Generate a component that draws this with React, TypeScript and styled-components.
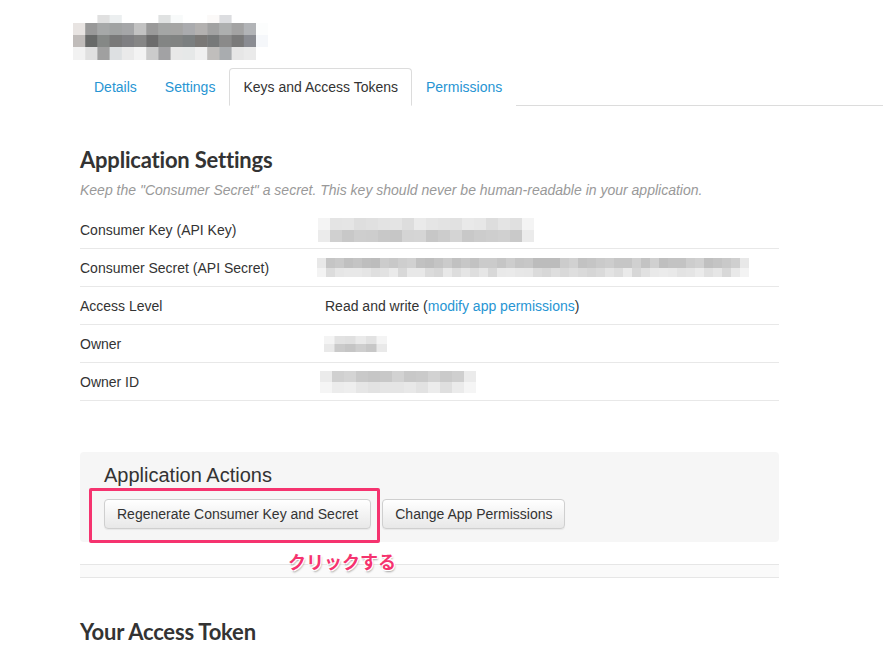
import styled, { createGlobalStyle } from "styled-components";

const GlobalStyle = createGlobalStyle`
  html, body {
    margin: 0;
    padding: 0;
    background: #fff;
  }
  body {
    font-family: "Liberation Sans", Arial, sans-serif;
    color: #333;
  }
`;

// pixelated placeholders for the hidden app name and key values
type MosaicProps = {
  cell: number;
  cellHeights?: number[];
  grid: string[][];
};

const Mosaic = ({ cell, cellHeights, grid }: MosaicProps) => {
  const heights = cellHeights ?? grid.map(() => cell);
  const width = grid[0].length * cell;
  const height = heights.reduce((a, b) => a + b, 0);
  let y = 0;
  return (
    <svg width={width} height={height} style={{ display: "block" }}>
      {grid.map((row, r) => {
        const top = y;
        y += heights[r];
        return row.map((color, c) => (
          <rect
            key={`${r}-${c}`}
            x={c * cell}
            y={top}
            width={cell + 0.5}
            height={heights[r]}
            fill={color}
          />
        ));
      })}
    </svg>
  );
};

const seeded = (seed: number) => {
  let s = seed;
  return () => {
    s = (s * 9301 + 49297) % 233280;
    return s / 233280;
  };
};

const shade = (v: number) => {
  const n = Math.max(0, Math.min(255, Math.round(v)));
  const h = n.toString(16).padStart(2, "0");
  return `#${h}${h}${h}`;
};

const makeGrid = (cols: number, tones: number[], spread: number, seed: number) => {
  const rand = seeded(seed);
  return tones.map((tone) =>
    Array.from({ length: cols }, (_, i) => {
      if (i === 0 || i === cols - 1) return shade(tone + (255 - tone) * 0.6);
      return shade(tone + (rand() - 0.5) * spread);
    })
  );
};

const titleGrid: string[][] = [
  ["#fff", "#fff", "#e0e0e0", "#eceff0", "#fff", "#fff", "#fff", "#e0e2e2", "#f8fafa", "#fff", "#fff", "#fbf9f8", "#dcdde0", "#fff", "#fff", "#fff"],
  ["#e8e4e2", "#999999", "#a6a8a8", "#a1a3a3", "#a5a6a8", "#c2c2c2", "#9a9a9a", "#a4a6a5", "#a5a5a4", "#aaabae", "#b3b1b0", "#a2a2a2", "#adafaf", "#a3a3a3", "#b2b4b7", "#fcfdfd"],
  ["#c0bcba", "#686a69", "#858886", "#797979", "#7f7f82", "#868686", "#6c6c6c", "#838584", "#818382", "#7b7f80", "#7a7876", "#777979", "#8a8a8a", "#7a7a7a", "#8a8c92", "#f5f7fa"],
  ["#f2f2f2", "#e0e0e0", "#a0a0a0", "#dde0e2", "#eaeaea", "#f3f3f3", "#cbcbcb", "#a2a2a4", "#e8e8e8", "#e6e8e8", "#f0f0f0", "#c0bebc", "#a9acaf", "#e6e6e6", "#eaeaea", "#fff"],
];

const Page = styled.div`
  padding: 15px 0 0 80px;
  min-height: 649px;
  box-sizing: border-box;
  overflow: hidden;
`;

const AppName = styled.div`
  margin-left: -7px;
  height: 45px;
`;

const TabBar = styled.ul`
  display: flex;
  list-style: none;
  margin: 8px 0 0;
  padding: 0;
  height: 37px;
  border-bottom: 1px solid #dcdcdc;
`;

const Tab = styled.li<{ $active?: boolean }>`
  display: flex;
  align-items: center;
  padding: 0 13px;
  font-size: 14px;
  color: ${({ $active }) => ($active ? "#333" : "#2795d3")};
  background: #fff;
  border: 1px solid ${({ $active }) => ($active ? "#dcdcdc" : "transparent")};
  border-bottom-color: transparent;
  border-radius: 4px 4px 0 0;
  margin-bottom: -1px;
  cursor: pointer;
`;

const Content = styled.div`
  width: 699px;
`;

const SectionTitle = styled.h2`
  margin: 40px 0 0;
  font-family: "Lato", "Liberation Sans", sans-serif;
  font-weight: 700;
  font-size: 22px;
  line-height: 28px;
  color: #333;
  letter-spacing: -0.2px;
`;

const Hint = styled.p`
  margin: 6px 0 11px;
  font-size: 14px;
  line-height: 20px;
  font-style: italic;
  color: #999;
`;

const Table = styled.div`
  display: flex;
  flex-direction: column;
`;

const Row = styled.div`
  display: grid;
  grid-template-columns: 245px 1fr;
  align-items: center;
  height: 37px;
  border-bottom: 1px solid #e8e8e8;
  font-size: 14px;
  color: #333;
`;

const Value = styled.div<{ $shift?: number }>`
  display: flex;
  align-items: center;
  margin-left: ${({ $shift }) => $shift ?? 0}px;
`;

const Link = styled.a`
  color: #2795d3;
  text-decoration: none;
`;

const ActionsPanel = styled.div`
  position: relative;
  margin-top: 51px;
  padding: 11px 24px 13px;
  background: #f6f6f6;
  border-radius: 4px;
`;

const PanelTitle = styled.h3`
  margin: 0 0 12px;
  font-size: 20px;
  font-weight: 400;
  line-height: 24px;
  color: #333;
`;

const ButtonRow = styled.div`
  display: flex;
  gap: 11px;
`;

const Button = styled.button`
  height: 30px;
  padding: 0 12px;
  font-family: "Liberation Sans", Arial, sans-serif;
  font-size: 14px;
  line-height: 28px;
  color: #333;
  background: linear-gradient(#fff, #e8e8e8);
  border: 1px solid #cfcfcf;
  border-radius: 4px;
  box-shadow: 0 1px 1px rgba(0, 0, 0, 0.06);
  cursor: pointer;
`;

const Highlight = styled.div`
  position: absolute;
  left: 9px;
  top: 36px;
  width: 285px;
  height: 49px;
  border: 3px solid #f5336f;
  border-radius: 2px;
  pointer-events: none;
`;

const Callout = styled.span`
  position: absolute;
  left: 208px;
  top: 97px;
  font-family: "Noto Sans CJK JP", sans-serif;
  font-weight: 700;
  font-size: 18px;
  line-height: 24px;
  color: #f5336f;
  text-shadow: -1px -1px 0 #fff, 1px -1px 0 #fff, -1px 1px 0 #fff, 1px 1px 0 #fff,
    1px 2px 2px rgba(0, 0, 0, 0.35);
  white-space: nowrap;
`;

const Divider = styled.div`
  margin-top: 22px;
  height: 12px;
  background: #fafafa;
  border-top: 1px solid #e6e6e6;
  border-bottom: 1px solid #e6e6e6;
`;

const tabs = ["Details", "Settings", "Keys and Access Tokens", "Permissions"];

const App = () => {
  const consumerKey = makeGrid(18, [228, 205], 16, 7);
  const consumerSecret = makeGrid(48, [198, 225], 22, 31);
  const owner = makeGrid(6, [228, 200], 14, 3);
  const ownerId = makeGrid(13, [205, 230], 18, 11);

  return (
    <>
      <GlobalStyle />
      <Page>
        <AppName>
          <Mosaic cell={12.2} cellHeights={[8, 12, 12, 13]} grid={titleGrid} />
        </AppName>

        <TabBar>
          {tabs.map((tab) => (
            <Tab key={tab} $active={tab === "Keys and Access Tokens"}>
              {tab}
            </Tab>
          ))}
        </TabBar>

        <Content>
          <SectionTitle>Application Settings</SectionTitle>
          <Hint>
            Keep the "Consumer Secret" a secret. This key should never be human-readable in your
            application.
          </Hint>

          <Table>
            <Row>
              <span>Consumer Key (API Key)</span>
              <Value $shift={-7}>
                <Mosaic cell={12} grid={consumerKey} />
              </Value>
            </Row>
            <Row>
              <span>Consumer Secret (API Secret)</span>
              <Value $shift={-8}>
                <Mosaic cell={9} cellHeights={[10, 9]} grid={consumerSecret} />
              </Value>
            </Row>
            <Row>
              <span>Access Level</span>
              <Value>
                Read and write (<Link href="#">modify app permissions</Link>)
              </Value>
            </Row>
            <Row>
              <span>Owner</span>
              <Value $shift={-1}>
                <Mosaic cell={10.5} cellHeights={[8, 8]} grid={owner} />
              </Value>
            </Row>
            <Row>
              <span>Owner ID</span>
              <Value $shift={-5}>
                <Mosaic cell={12} cellHeights={[11, 11]} grid={ownerId} />
              </Value>
            </Row>
          </Table>

          <ActionsPanel>
            <PanelTitle>Application Actions</PanelTitle>
            <ButtonRow>
              <Button>Regenerate Consumer Key and Secret</Button>
              <Button>Change App Permissions</Button>
            </ButtonRow>
            <Highlight />
            <Callout>クリックする</Callout>
          </ActionsPanel>

          <Divider />

          <SectionTitle>Your Access Token</SectionTitle>
        </Content>
      </Page>
    </>
  );
};

export default App;
